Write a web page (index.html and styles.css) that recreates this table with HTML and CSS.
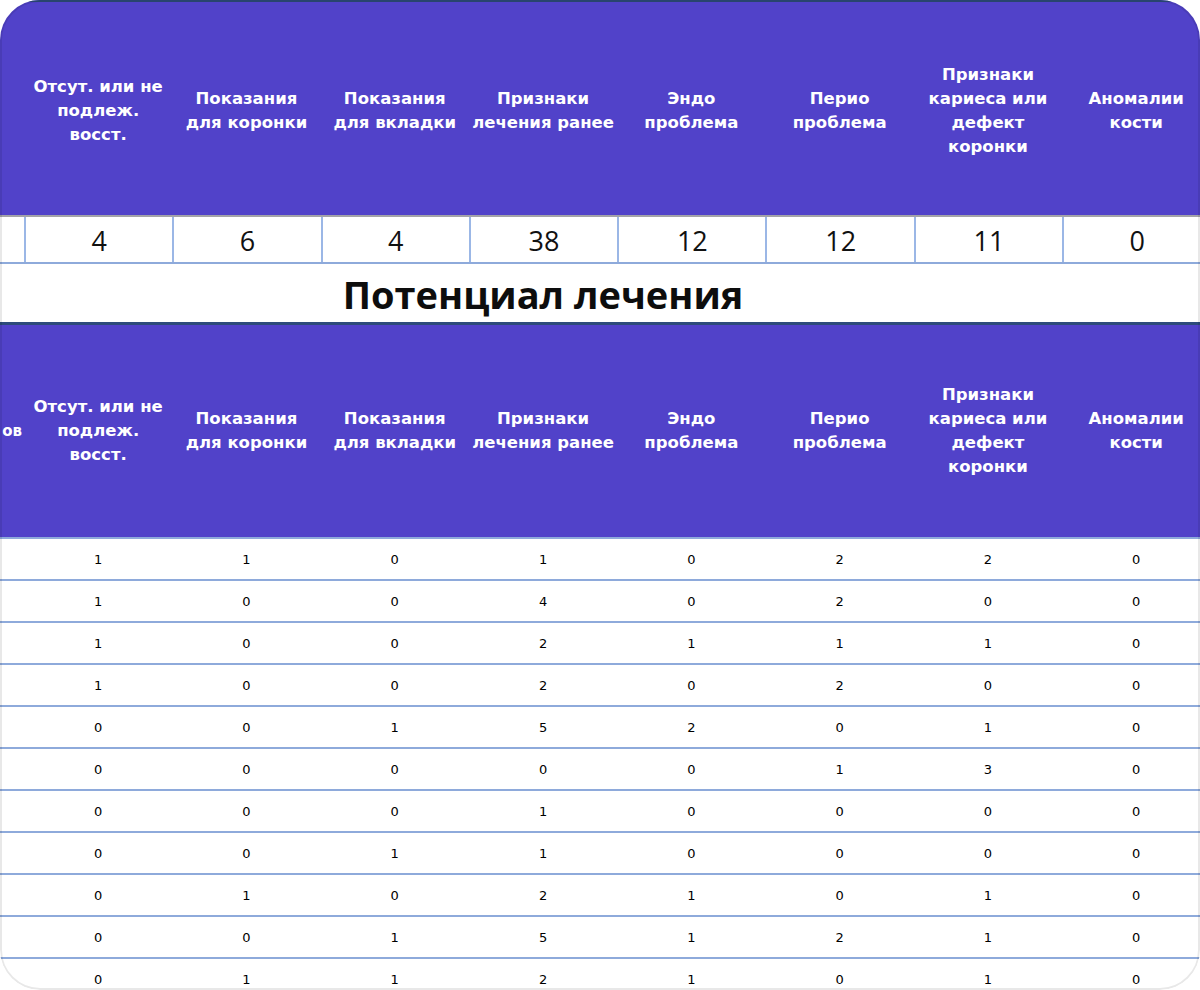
FILE: index.html
```html
<!DOCTYPE html>
<html lang="ru">
<head>
<meta charset="utf-8">
<title>Потенциал лечения</title>
<link rel="stylesheet" href="styles.css">
</head>
<body>
<div class="card">
  <div class="grid head head-top">
    <div class="hcell"></div>
    <div class="hcell">Отсут. или не<br>подлеж.<br>восст.</div>
    <div class="hcell">Показания<br>для коронки</div>
    <div class="hcell">Показания<br>для вкладки</div>
    <div class="hcell">Признаки<br>лечения ранее</div>
    <div class="hcell">Эндо<br>проблема</div>
    <div class="hcell">Перио<br>проблема</div>
    <div class="hcell">Признаки<br>кариеса или<br>дефект<br>коронки</div>
    <div class="hcell">Аномалии<br>кости</div>
  </div>
  <div class="grid totals">
    <div class="tcell"></div>
    <div class="tcell">4</div>
    <div class="tcell">6</div>
    <div class="tcell">4</div>
    <div class="tcell">38</div>
    <div class="tcell">12</div>
    <div class="tcell">12</div>
    <div class="tcell">11</div>
    <div class="tcell">0</div>
  </div>
  <div class="grid title-row">
    <div class="title">Потенциал лечения</div>
  </div>
  <div class="grid head head-bottom">
    <div class="hcell hcell-first">ов</div>
    <div class="hcell">Отсут. или не<br>подлеж.<br>восст.</div>
    <div class="hcell">Показания<br>для коронки</div>
    <div class="hcell">Показания<br>для вкладки</div>
    <div class="hcell">Признаки<br>лечения ранее</div>
    <div class="hcell">Эндо<br>проблема</div>
    <div class="hcell">Перио<br>проблема</div>
    <div class="hcell">Признаки<br>кариеса или<br>дефект<br>коронки</div>
    <div class="hcell">Аномалии<br>кости</div>
  </div>
  <div class="rows">
    <div class="grid row"><div></div><div>1</div><div>1</div><div>0</div><div>1</div><div>0</div><div>2</div><div>2</div><div>0</div></div>
    <div class="grid row"><div></div><div>1</div><div>0</div><div>0</div><div>4</div><div>0</div><div>2</div><div>0</div><div>0</div></div>
    <div class="grid row"><div></div><div>1</div><div>0</div><div>0</div><div>2</div><div>1</div><div>1</div><div>1</div><div>0</div></div>
    <div class="grid row"><div></div><div>1</div><div>0</div><div>0</div><div>2</div><div>0</div><div>2</div><div>0</div><div>0</div></div>
    <div class="grid row"><div></div><div>0</div><div>0</div><div>1</div><div>5</div><div>2</div><div>0</div><div>1</div><div>0</div></div>
    <div class="grid row"><div></div><div>0</div><div>0</div><div>0</div><div>0</div><div>0</div><div>1</div><div>3</div><div>0</div></div>
    <div class="grid row"><div></div><div>0</div><div>0</div><div>0</div><div>1</div><div>0</div><div>0</div><div>0</div><div>0</div></div>
    <div class="grid row"><div></div><div>0</div><div>0</div><div>1</div><div>1</div><div>0</div><div>0</div><div>0</div><div>0</div></div>
    <div class="grid row"><div></div><div>0</div><div>1</div><div>0</div><div>2</div><div>1</div><div>0</div><div>1</div><div>0</div></div>
    <div class="grid row"><div></div><div>0</div><div>0</div><div>1</div><div>5</div><div>1</div><div>2</div><div>1</div><div>0</div></div>
    <div class="grid row"><div></div><div>0</div><div>1</div><div>1</div><div>2</div><div>1</div><div>0</div><div>1</div><div>0</div></div>
  </div>
</div>
</body>
</html>
```

FILE: styles.css
```css
html, body {
  margin: 0;
  padding: 0;
  background: #ffffff;
}

.card {
  position: relative;
  width: 1200px;
  height: 990px;
  box-sizing: border-box;
  border-radius: 40px;
  overflow: hidden;
  background: #ffffff;
}

.card::after {
  content: "";
  position: absolute;
  inset: 0;
  border: 2px solid rgba(0, 0, 0, 0.09);
  border-radius: 40px;
  pointer-events: none;
}

.grid {
  display: grid;
  grid-template-columns: 24px repeat(8, 148.3px);
}

.head {
  background: #5142c9;
  color: #ffffff;
  font-family: "DejaVu Sans", Verdana, sans-serif;
  font-weight: 700;
  font-size: 16.5px;
  line-height: 24px;
}

.head-top {
  height: 217px;
  box-sizing: border-box;
  border-top: 2px solid #2d4b7b;
  border-bottom: 2px solid #a3a3a8;
  padding-top: 4px;
}

.head-bottom {
  height: 217px;
  box-sizing: border-box;
  border-top: 3px solid #2d4b7b;
  border-bottom: 2px solid #8eaadb;
}

.hcell {
  display: flex;
  align-items: center;
  justify-content: center;
  text-align: center;
  white-space: nowrap;
  overflow: hidden;
}

.hcell-first {
  justify-content: flex-end;
  padding-right: 2px;
  overflow: visible;
  font-size: 15px;
}

.totals {
  height: 47px;
  box-sizing: border-box;
  border-bottom: 2px solid #8eaadb;
  font-family: "Open Sans", "Noto Sans", sans-serif;
  font-size: 27px;
  color: #111111;
}

.tcell {
  display: flex;
  align-items: center;
  justify-content: center;
  border-left: 2px solid #9bb7e6;
  padding-top: 1px;
}

.tcell:first-child {
  border-left: none;
}

.title-row {
  height: 58px;
  align-items: center;
}

.title {
  grid-column: 2 / 9;
  text-align: center;
  font-family: "Open Sans", "Noto Sans", sans-serif;
  font-weight: 700;
  font-size: 38px;
  line-height: 1;
  color: #0d0d0d;
  padding-top: 2px;
}

.row {
  height: 42px;
  box-sizing: border-box;
  border-bottom: 2px solid #8eaadb;
  font-family: "DejaVu Sans", Verdana, sans-serif;
  font-size: 13px;
  color: #000000;
}

.row > div {
  display: flex;
  align-items: center;
  justify-content: center;
}
```
